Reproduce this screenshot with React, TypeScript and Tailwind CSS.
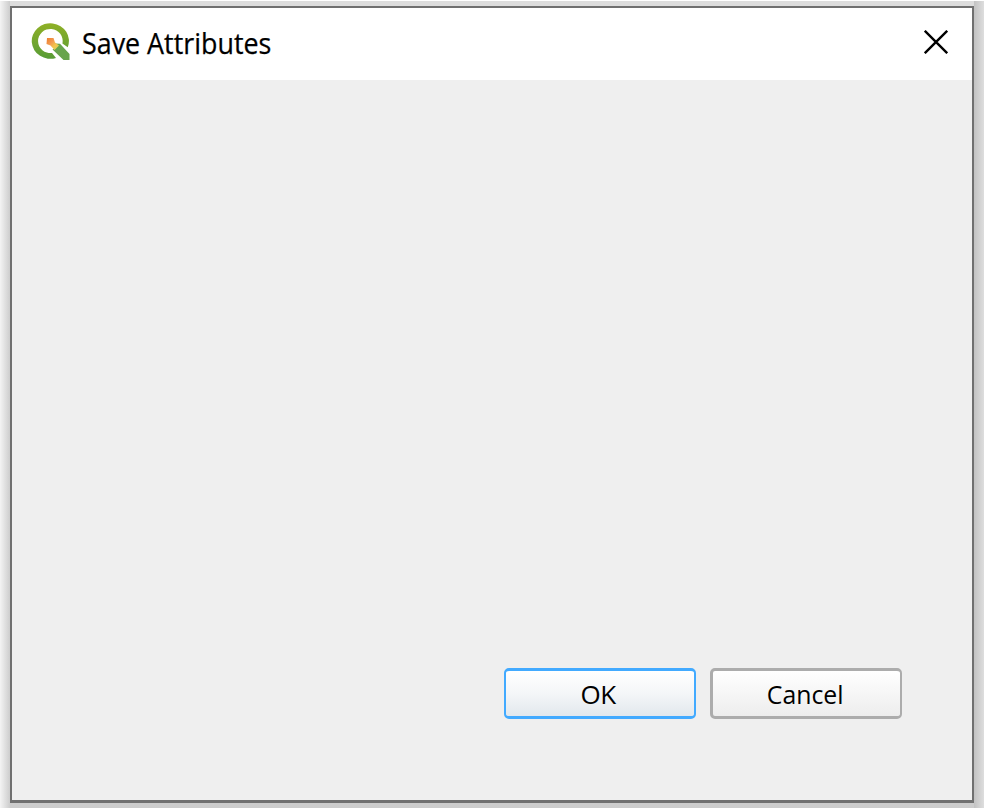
import React from "react";

function Logo() {
  return (
    <svg width="40" height="38" viewBox="0 0 40 38" className="mt-[-4px] shrink-0">
      <defs>
        <linearGradient id="ring" x1="0" y1="0" x2="0" y2="1">
          <stop offset="0" stopColor="#8fb026" />
          <stop offset="1" stopColor="#589c36" />
        </linearGradient>
        <linearGradient id="core" gradientUnits="userSpaceOnUse" x1="16" y1="15" x2="27" y2="26">
          <stop offset="0" stopColor="#ee7f2d" />
          <stop offset="0.4" stopColor="#f29a50" />
          <stop offset="0.7" stopColor="#f3c54c" />
          <stop offset="1" stopColor="#d9cf5a" />
        </linearGradient>
      </defs>
      <path
        d="M25 35 A18.6 17.8 0 1 1 36.8 24.2 L31.4 20.5 A12.3 12.1 0 1 0 21 30 Z"
        fill="url(#ring)"
      />
      <path d="M24 20.5 L29 20.8 L38.5 31 V37 H32.5 L21.5 26.5 L25 25 Z" fill="#68a44c" />
      <path d="M16 15 H22.5 L24 19.5 L28 22.5 L23.5 27 L19.5 22.5 L15.5 21 Z" fill="url(#core)" />
    </svg>
  );
}

function DialogButton({ label, primary = false }: { label: string; primary?: boolean }) {
  return (
    <button
      className={
        primary
          ? "flex h-[51px] w-[192px] items-center justify-center rounded-[5px] border-x-2 border-y-[3px] border-[#42aaff] bg-linear-to-b from-white via-[#f4f6f8] to-[#e2e8ed]"
          : "flex h-[51px] w-[192px] items-center justify-center rounded-[5px] border-y-[3px] border-r-2 border-l-[3px] border-[#acacac] bg-linear-to-b from-white to-[#ededed]"
      }
    >
      <span
        className={
          primary
            ? "block origin-center translate-x-[-2px] text-[26px] leading-none tracking-[-0.5px]"
            : "block origin-center translate-x-[-1px] scale-x-[0.955] text-[26px] leading-none"
        }
      >
        {label}
      </span>
    </button>
  );
}

export default function App() {
  return (
    <div className="flex h-[808px] w-[984px] flex-col overflow-hidden bg-white pt-px font-['Open_Sans','Noto_Sans',sans-serif] text-black">
      <div className="flex h-[807px] bg-[#d3d3d3]">
        <div className="w-[10px] shrink-0 bg-linear-to-r from-[#f4f4f4] to-[#cdcdcd]" />
        <div className="flex w-[964px] shrink-0 flex-col bg-linear-to-b from-[#dddddd] to-[#cccccc] pt-[5px]">
          <main className="flex h-[797px] flex-col border-2 border-b-[3px] border-[#707070] bg-[#efefef]">
            <header className="flex h-[72px] shrink-0 items-center bg-white pl-[19px] pr-[24px]">
              <Logo />
              <h1 className="ml-[11px] mt-[-3px] origin-left scale-x-[0.926] whitespace-nowrap text-[29px] leading-none [-webkit-text-stroke:0.25px_#000]">
                Save Attributes
              </h1>
              <button aria-label="Close" className="mt-[-4px] ml-auto">
                <svg width="24" height="24" viewBox="0 0 24 24">
                  <path d="M0.8 0.8 L23.2 23.2 M23.2 0.8 L0.8 23.2" stroke="#000" strokeWidth="2.4" />
                </svg>
              </button>
            </header>
            <div className="flex-1" />
            <footer className="mb-[81px] flex justify-end gap-[14px] pr-[70px]">
              <DialogButton label="OK" primary />
              <DialogButton label="Cancel" />
            </footer>
          </main>
        </div>
        <div className="w-[10px] shrink-0 bg-linear-to-r from-[#c2c2c2] to-[#dedede]" />
      </div>
    </div>
  );
}
